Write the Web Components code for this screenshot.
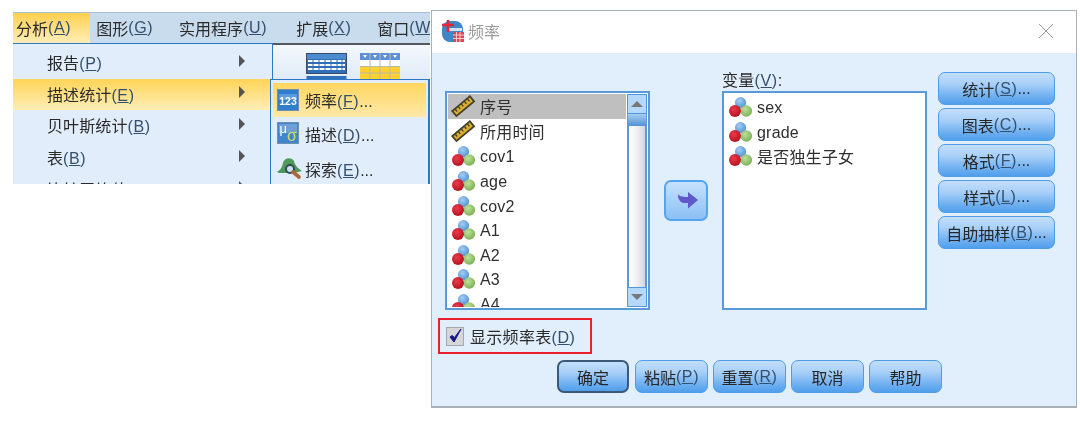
<!DOCTYPE html>
<html lang="zh">
<head>
<meta charset="utf-8">
<title>频率</title>
<style>
  html, body { margin: 0; padding: 0; background: #fff; }
  body {
    width: 1080px;
    height: 421px;
    overflow: hidden;
    display: flex;
    align-items: flex-start;
    font: 16px "Liberation Sans", "Noto Sans CJK SC", sans-serif;
    color: #2a2a2a;
    filter: blur(.4px);
  }
</style>
</head>
<body>

<menu-shot>
  <top-item active>分析<key-hint>A</key-hint></top-item>
  <top-item>图形<key-hint>G</key-hint></top-item>
  <top-item style="margin-right: 3px">实用程序<key-hint>U</key-hint></top-item>
  <top-item>扩展<key-hint>X</key-hint></top-item>
  <top-item>窗口<key-hint>W</key-hint></top-item>

  <drop-item slot="drop">报告<key-hint>P</key-hint></drop-item>
  <drop-item slot="drop" active>描述统计<key-hint>E</key-hint></drop-item>
  <drop-item slot="drop">贝叶斯统计<key-hint>B</key-hint></drop-item>
  <drop-item slot="drop">表<key-hint>B</key-hint></drop-item>
  <drop-item slot="drop">比较平均值<key-hint>M</key-hint></drop-item>

  <sub-item slot="sub" active icon="freq">频率<key-hint>F</key-hint>...</sub-item>
  <sub-item slot="sub" icon="desc">描述<key-hint>D</key-hint>...</sub-item>
  <sub-item slot="sub" icon="explore">探索<key-hint>E</key-hint>...</sub-item>
</menu-shot>

<freq-dialog>
  <list-box slot="source" scroll>
    <var-row type="scale" selected>序号</var-row>
    <var-row type="scale">所用时间</var-row>
    <var-row>cov1</var-row>
    <var-row>age</var-row>
    <var-row>cov2</var-row>
    <var-row>A1</var-row>
    <var-row>A2</var-row>
    <var-row>A3</var-row>
    <var-row>A4</var-row>
  </list-box>

  <span slot="label">变量<key-hint>V</key-hint>:</span>
  <list-box slot="target">
    <var-row>sex</var-row>
    <var-row>grade</var-row>
    <var-row plain>是否独生子女</var-row>
  </list-box>

  <blue-button slot="side">统计<key-hint>S</key-hint>...</blue-button>
  <blue-button slot="side">图表<key-hint>C</key-hint>...</blue-button>
  <blue-button slot="side">格式<key-hint>F</key-hint>...</blue-button>
  <blue-button slot="side">样式<key-hint>L</key-hint>...</blue-button>
  <blue-button slot="side">自助抽样<key-hint>B</key-hint>...</blue-button>

  <check-row slot="check">显示频率表<key-hint>D</key-hint></check-row>

  <blue-button slot="foot" wide primary>确定</blue-button>
  <blue-button slot="foot" wide>粘贴<key-hint>P</key-hint></blue-button>
  <blue-button slot="foot" wide>重置<key-hint>R</key-hint></blue-button>
  <blue-button slot="foot" wide>取消</blue-button>
  <blue-button slot="foot" wide>帮助</blue-button>
</freq-dialog>

<script>
class KeyHint extends HTMLElement {
    constructor() {
        super();
        this.attachShadow({ mode: 'open' });
        this.shadowRoot.innerHTML = `<style>
          :host { display: inline; color: #34506f; letter-spacing: .6px; }
        </style>(<u><slot></slot></u>)`;
    }
}
customElements.define('key-hint', KeyHint);

class TopItem extends HTMLElement {
    constructor() {
        super();
        this.attachShadow({ mode: 'open' });
        this.shadowRoot.innerHTML = `
        <style>
          :host { display: flex; align-items: center; white-space: nowrap; }
          :host([active]) {
            padding: 0 19px 0 3px;
            margin-right: -20px;
            background: linear-gradient(#ffd04f, #ffeeb8);
          }
        </style><slot></slot>`;
    }
}
customElements.define('top-item', TopItem);

class DropItem extends HTMLElement {
    constructor() {
        super();
        this.attachShadow({ mode: 'open' });
        this.shadowRoot.innerHTML = `
        <style>
          :host {
            display: flex;
            align-items: center;
            justify-content: space-between;
            height: 31.6px;
            padding: 0 27px 0 34px;
            flex: none;
          }
          :host([active]) { background: linear-gradient(#ffd457, #ffedb5); }
          i {
            border-left: 6px solid #555;
            border-top: 6px solid transparent;
            border-bottom: 6px solid transparent;
            margin-top: -4px;
          }
          span { padding-bottom: 1px; letter-spacing: .1px; }
        </style><span><slot></slot></span><i></i>`;
    }
}
customElements.define('drop-item', DropItem);

class SubItem extends HTMLElement {
    static icons = {
        freq: `<svg width="24" height="23" viewBox="0 0 24 23">
            <rect x=".5" y=".5" width="21" height="21" fill="#2f7fca" stroke="#6f8fb0"/>
            <rect x="2" y="5" width="18" height="6" fill="#5a9ce0"/>
            <text x="11" y="15.500" text-anchor="middle" font-family="Liberation Sans" font-weight="700" font-size="10.500" fill="#fff">123</text>
          </svg>`,
        desc: `<svg width="24" height="23" viewBox="0 0 24 23">
            <rect x=".5" y=".5" width="21" height="21" fill="#3f86cc" stroke="#6f8fb0"/>
            <rect x="2" y="2" width="18" height="9" fill="#6f9fd4"/>
            <text x="2.500" y="11" font-family="Liberation Sans" font-size="13" fill="#fff">μ</text>
            <text x="10" y="19" font-family="Liberation Sans" font-size="16" fill="#cfe05a">σ</text>
          </svg>`,
        explore: `<svg width="26" height="23" viewBox="0 0 26 23">
            <path d="M0 15 C3 13 5 11 6 6 C7 0 15 0 17 4 C18 9 22 12 25 14 L17 16 H2Z" fill="#4f9a5a"/>
            <circle cx="13" cy="12" r="4" fill="#cfe2f2" stroke="#37485a" stroke-width="2"/>
            <path d="M16 15 L22 20" stroke="#b0683a" stroke-width="3.600" stroke-linecap="round"/>
          </svg>`
    };

    constructor() {
        super();
        this.attachShadow({ mode: 'open' });
        const icon = SubItem.icons[this.getAttribute('icon')];
        this.shadowRoot.innerHTML = `
        <style>
          :host {
            display: flex;
            align-items: center;
            box-sizing: border-box;
            height: 35px;
            padding: 0 0 4px 4px;
            white-space: nowrap;
          }
          :host([active]) {
            height: 34px;
            padding-bottom: 0;
            margin-bottom: 1px;
            background: linear-gradient(#ffd660, #ffe9a8);
          }
          .ic { width: 28px; flex: none; display: flex; }
        </style><span class="ic">${icon}</span><span><slot></slot></span>`;
    }
}
customElements.define('sub-item', SubItem);

class MenuShot extends HTMLElement {
    constructor() {
        super();
        this.attachShadow({ mode: 'open' });
        this.shadowRoot.innerHTML = `
        <style>
          :host {
            display: block;
            position: relative;
            flex: none;
            width: 417px;
            height: 172px;
            margin: 12px 0 0 13px;
            overflow: hidden;
            background: #e1edfa;
          }
          .bar {
            height: 31px;
            display: flex;
            align-items: stretch;
            gap: 26px;
            background: #c9dcee;
            border-top: 1px solid #a9bfd6;
            box-sizing: border-box;
            white-space: nowrap;
          }
          .under { display: flex; height: 141px; }
          .drop {
            width: 260px;
            flex: none;
            box-sizing: border-box;
            border-top: 1px solid #2b78c4;
            border-right: 1px solid #2b78c4;
            padding-top: 3px;
            display: flex;
            flex-direction: column;
            background: #e1edfa;
          }
          .tools {
            flex: 1;
            border-top: 2px solid #55595e;
            background: linear-gradient(#f4f8fc, #dbe8f5 40px);
            padding: 8px 0 0 33px;
            display: flex;
            gap: 13px;
            align-items: flex-start;
          }
          .sub {
            position: absolute;
            left: 257px;
            top: 67px;
            width: 160px;
            height: 110px;
            box-sizing: border-box;
            border: 1px solid #2b78c4;
            border-right: 2px solid #2b78c4;
            background: #e1edfa;
            padding: 3px 2px 0 2px;
          }
        </style>
        <div class="bar"><slot></slot></div>
        <div class="under">
          <div class="drop"><slot name="drop"></slot></div>
          <div class="tools">
            <svg width="41" height="40" viewBox="0 0 41 40">
              <rect x=".5" y=".5" width="40" height="20" fill="#2f6fb8" stroke="#3a4a6a"/>
              <rect x="1" y="1" width="39" height="5" fill="#4d8bd0"/>
              <path d="M2 8h37M2 12h37M2 16h37" stroke="#fff" stroke-width="2"/>
              <path d="M7 7v12M13 7v12M19 7v12M25 7v12M31 7v12M36 7v12" stroke="#2f6fb8"/>
              <rect x=".5" y="23" width="40" height="17" fill="#2f6fb8"/>
            </svg>
            <svg width="40" height="26" viewBox="0 0 40 26">
              <rect width="40" height="26" fill="#ffd02f"/>
              <rect width="40" height="7" fill="#5d8fd8"/>
              <rect y="7" width="40" height="6" fill="#fff"/>
              <path d="M0 13.500h40M0 20h40M10 0v26M20 0v26M30 0v26" stroke="#b9b9a8"/>
              <path d="M3 2h4l-2 3zM13 2h4l-2 3zM23 2h4l-2 3zM33 2h4l-2 3z" fill="#fff"/>
            </svg>
          </div>
        </div>
        <div class="sub"><slot name="sub"></slot></div>`;
    }
}
customElements.define('menu-shot', MenuShot);

class VarRow extends HTMLElement {
    constructor() {
        super();
        this.attachShadow({ mode: 'open' });
        const scale = this.getAttribute('type') === 'scale';
        const icon = scale ? `
          <svg width="24" height="20" viewBox="0 0 24 20">
            <g transform="rotate(-40 11 10)">
              <rect x="-.5" y="7" width="23" height="6.500" fill="#dcae2c" stroke="#44422f" stroke-width="1.800"/>
              <path d="M3 7.500v3M7 7.500v3M11 7.500v3M15 7.500v3M19 7.500v3" stroke="#4a4428" stroke-width="1.400"/>
            </g>
          </svg>` : `
          <svg width="24" height="20" viewBox="0 0 24 20" class="dots">
            <defs>
              <radialGradient id="b" cx=".4" cy=".35" r=".7"><stop offset="0" stop-color="#a5cdf2"/><stop offset="1" stop-color="#4d8fd4"/></radialGradient>
              <radialGradient id="r" cx=".4" cy=".35" r=".7"><stop offset="0" stop-color="#ea3a4a"/><stop offset="1" stop-color="#b3101f"/></radialGradient>
              <radialGradient id="g" cx=".4" cy=".35" r=".7"><stop offset="0" stop-color="#bfe09a"/><stop offset="1" stop-color="#78ae52"/></radialGradient>
            </defs>
            <circle cx="11.500" cy="5.600" r="5.600" fill="url(#b)"/>
            <circle cx="17.300" cy="14" r="5.800" fill="url(#g)"/>
            <circle cx="6" cy="14" r="6" fill="url(#r)"/>
          </svg>`;
        this.shadowRoot.innerHTML = `
        <style>
          :host {
            display: flex;
            align-items: center;
            height: 24.6px;
            flex: none;
            white-space: nowrap;
            letter-spacing: .2px;
            padding-left: 4px;
            color: #2f2f2f;
          }
          :host([selected]) { background: #bfbfbf; }
          svg { width: 24px; flex: none; margin-right: 4px; display: block; overflow: visible; }
          .dots { margin-top: 2px; }
          span { padding-top: 4px; }
          :host([plain]) span { padding-top: 2px; }
          :host([type=scale]) span { padding: 0; }
        </style>${icon}<span><slot></slot></span>`;
    }
}
customElements.define('var-row', VarRow);

class ListBox extends HTMLElement {
    constructor() {
        super();
        this.attachShadow({ mode: 'open' });
        const bar = this.hasAttribute('scroll') ? `
          <div class="bar">
            <div class="btn"><i class="up"></i></div>
            <div class="thumb"></div>
            <div class="track"></div>
            <div class="btn"><i class="down"></i></div>
          </div>` : '';
        this.shadowRoot.innerHTML = `
        <style>
          :host {
            display: flex;
            box-sizing: border-box;
            height: 219px;
            border: 2px solid #5b9ad8;
            background: #fff;
            padding: 1px;
            overflow: hidden;
          }
          .rows { flex: 1; min-width: 0; display: flex; flex-direction: column; overflow: hidden; }
          .bar {
            width: 20px;
            flex: none;
            margin-left: 1px;
            display: flex;
            flex-direction: column;
          }
          .btn {
            height: 20px;
            flex: none;
            box-sizing: border-box;
            border: 1px solid #4d98e2;
            background: #b5d8fb;
            display: flex;
            align-items: center;
            justify-content: center;
          }
          .thumb {
            height: 12px;
            flex: none;
            background: linear-gradient(#a8cdf2, #4f92d8);
            border-left: 1px solid #5b9ad8;
            border-right: 1px solid #5b9ad8;
          }
          .track {
            flex: 1;
            background: linear-gradient(90deg, #fff, #f2f2f5 45%, #d4d4dc);
            border-left: 2px solid #5b9ad8;
            border-right: 2px solid #5b9ad8;
          }
          i { border-left: 6px solid transparent; border-right: 6px solid transparent; }
          .up { border-bottom: 6px solid #777; }
          .down { border-top: 6px solid #777; }
        </style>
        <div class="rows"><slot></slot></div>${bar}`;
    }
}
customElements.define('list-box', ListBox);

class BlueButton extends HTMLElement {
    constructor() {
        super();
        this.attachShadow({ mode: 'open' });
        this.shadowRoot.innerHTML = `
        <style>
          :host {
            display: flex;
            align-items: center;
            justify-content: center;
            box-sizing: border-box;
            width: 117px;
            height: 33px;
            flex: none;
            border: 1.500px solid #4f9de8;
            border-radius: 7px;
            background: linear-gradient(#c3defc, #a9d0f8 35%, #70b0f0 75%, #509fec);
            white-space: nowrap;
            color: #262626;
          }
          :host([wide]) { width: 73px; }
          :host([primary]) { width: 72px; border-color: #3c5a78; border-width: 2px; }
          :host([arrow]) {
            width: 44px;
            height: 41px;
            border: 2px solid #55a5ee;
            background: linear-gradient(#c6e1fd, #a8d0f8 50%, #8cc0f5);
          }
        </style><slot></slot>`;
    }
}
customElements.define('blue-button', BlueButton);

class CheckRow extends HTMLElement {
    constructor() {
        super();
        this.attachShadow({ mode: 'open' });
        this.shadowRoot.innerHTML = `
        <style>
          :host {
            display: flex;
            align-items: center;
            box-sizing: border-box;
            width: 154px;
            height: 36px;
            border: 2px solid #e81f2e;
            padding-left: 6px;
            white-space: nowrap;
            letter-spacing: .3px;
          }
          svg { display: block; flex: none; margin-right: 6px; }
        </style>
        <svg width="18" height="19" viewBox="0 0 18 19">
          <rect x=".5" y=".5" width="17" height="18" fill="#d6d6d8" stroke="#a8a8ac"/>
          <path d="M4 10 L8 15 L15 2 L8.500 10.500 L6 8.500Z" fill="#17178c" stroke="#17178c" stroke-linejoin="round"/>
        </svg><span><slot></slot></span>`;
    }
}
customElements.define('check-row', CheckRow);

class FreqDialog extends HTMLElement {
    constructor() {
        super();
        this.attachShadow({ mode: 'open' });
        this.shadowRoot.innerHTML = `
        <style>
          :host {
            display: flex;
            flex-direction: column;
            flex: none;
            box-sizing: border-box;
            width: 646px;
            height: 398px;
            margin: 10px 0 0 1px;
            border: 1px solid #a9b0b8;
            border-bottom-width: 2px;
            background: #e1eefb;
          }
          .title {
            height: 42px;
            flex: none;
            box-sizing: border-box;
            background: #fff;
            display: flex;
            align-items: center;
            padding: 0 23px 2px 9px;
            color: #9a9a9a;
          }
          .title svg:first-child { margin-right: 3px; }
          .title span { flex: 1; }
          .main { display: flex; align-items: flex-start; padding-left: 13px; height: 257px; }
          .src { width: 205px; margin-top: 38px; flex: none; }
          .go { margin: 127px 0 0 14px; flex: none; }
          .dst { width: 205px; margin: 19px 0 0 14px; flex: none; }
          .lbl { height: 19px; line-height: 17px; white-space: nowrap; letter-spacing: .3px; }
          .side { display: flex; flex-direction: column; gap: 3px; margin: 19px 0 0 11px; flex: none; }
          .chk { margin: 8px 0 0 6px; }
          .foot { display: flex; gap: 5px; margin: 6px 0 0 125px; }
          .foot ::slotted([primary]) { margin-right: 1px; }
        </style>
        <div class="title">
          <svg width="24" height="24" viewBox="0 0 24 24">
            <rect x="1" y="2" width="21" height="21" rx="8" fill="#3f86c6"/>
            <rect x="6" y="9" width="15" height="3" fill="#cfe3f4"/>
            <path d="M7 1v12M1 6h12" stroke="#e0283a" stroke-width="2.600"/>
            <rect x="12" y="13" width="11" height="10" fill="#d9485a"/>
            <path d="M12 16h11M12 19.500h11M15.500 13v10M19 13v10" stroke="#f4c5cb"/>
          </svg>
          <span>频率</span>
          <svg width="14" height="14" viewBox="0 0 14 14">
            <path d="M0 0L14 14M14 0L0 14" stroke="#9a9a9a" stroke-width="1"/>
          </svg>
        </div>
        <div class="main">
          <div class="src"><slot name="source"></slot></div>
          <div class="go">
            <blue-button arrow>
              <svg width="20" height="17" viewBox="0 0 20 17" style="margin-left:3px">
                <path d="M0 2 C1 4 3 5 10 5 V0 L20 8 L10 16.500 V11 H6 C3 11 1 8 0 5Z" fill="#5f58c8"/>
              </svg>
            </blue-button>
          </div>
          <div class="dst">
            <div class="lbl"><slot name="label"></slot></div>
            <slot name="target"></slot>
          </div>
          <div class="side"><slot name="side"></slot></div>
        </div>
        <div class="chk"><slot name="check"></slot></div>
        <div class="foot"><slot name="foot"></slot></div>`;
    }
}
customElements.define('freq-dialog', FreqDialog);
</script>
</body>
</html>
